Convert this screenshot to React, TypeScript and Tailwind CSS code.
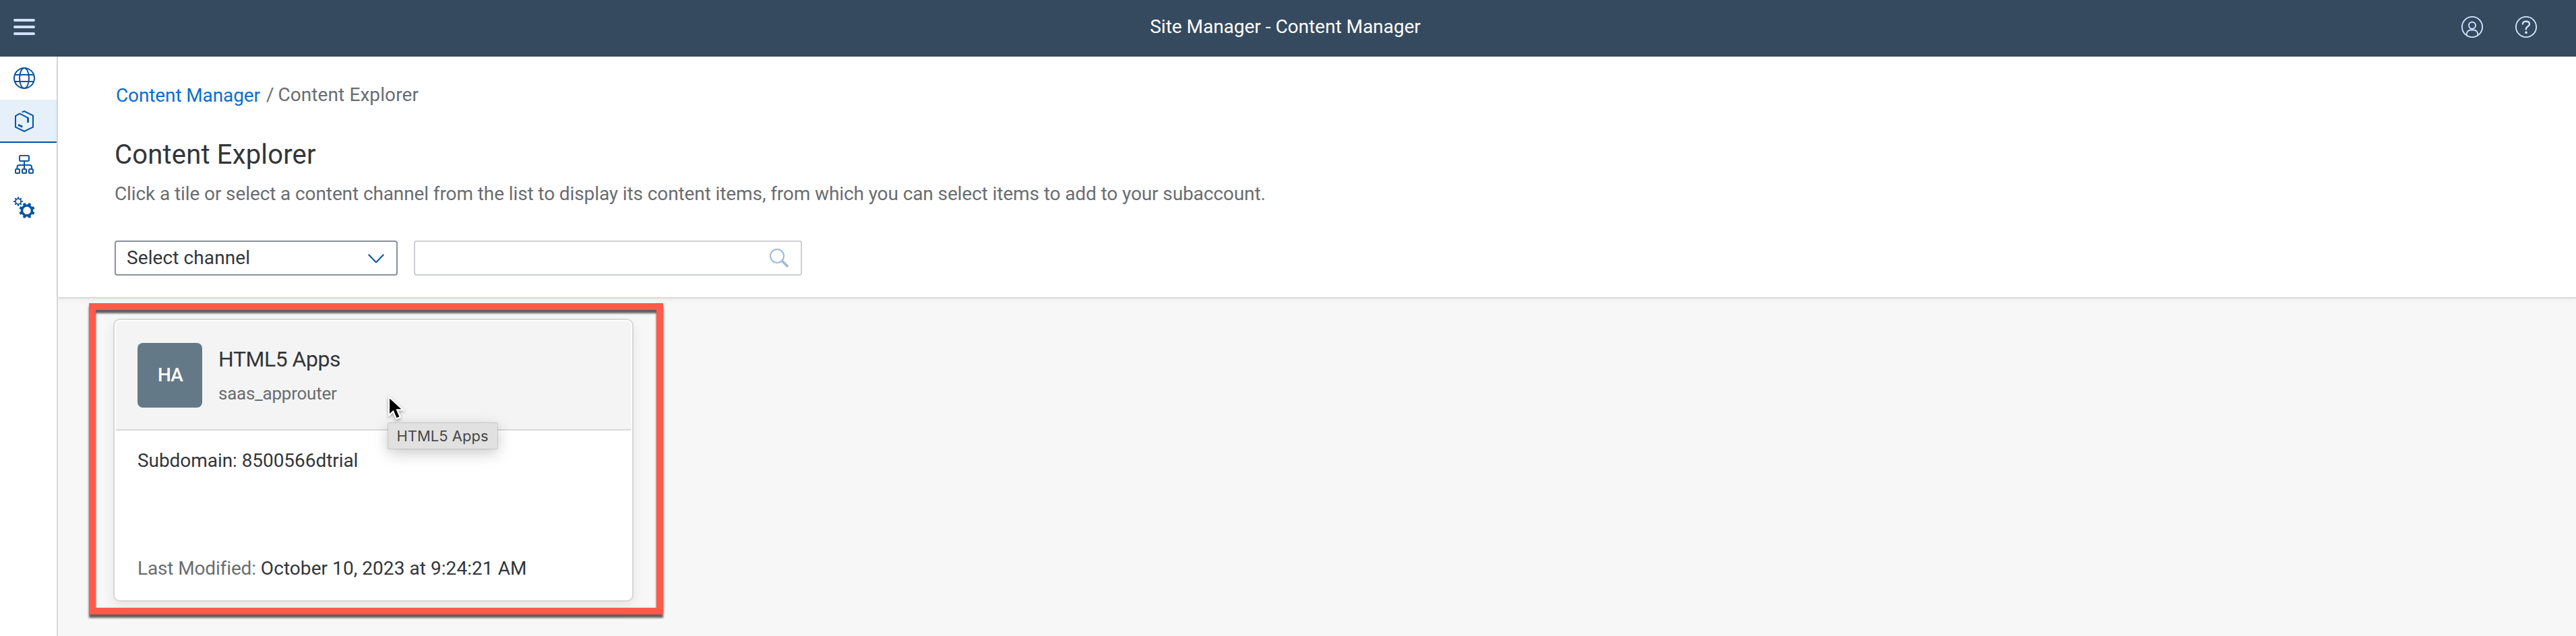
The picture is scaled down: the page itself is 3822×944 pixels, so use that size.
import type { ReactNode } from 'react';

const TEETH = [0, 45, 90, 135, 180, 225, 270, 315];

function MenuIcon() {
  return (
    <svg className="size-8 fill-[#d1e1ff]" viewBox="0 0 32 32">
      <rect x="0" y="4" width="32" height="4" rx="2" />
      <rect x="0" y="14" width="32" height="4" rx="2" />
      <rect x="0" y="24" width="32" height="4" rx="2" />
    </svg>
  );
}

function UserIcon() {
  return (
    <svg className="size-8 fill-none stroke-[#d1e1ff]" viewBox="0 0 32 32" strokeWidth="1.9">
      <circle cx="16" cy="16" r="15.1" />
      <circle cx="16" cy="13.7" r="5" />
      <path d="M7.7 28v-1.2c0-3.6 2.8-6.3 6.2-6.3h4.2c3.4 0 6.2 2.7 6.2 6.3V28" />
    </svg>
  );
}

function HelpIcon() {
  return (
    <svg className="size-8 fill-none stroke-[#d1e1ff]" viewBox="0 0 32 32" strokeWidth="1.9">
      <circle cx="16" cy="16" r="15.1" />
      <path
        d="M10.9 11.6C10.9 9.2 13 7.7 15.9 7.7c3 0 5.100 1.6 5.100 4 0 3.7-5.200 3.6-5.200 7.7"
        strokeWidth="2.4"
        strokeLinecap="round"
      />
      <circle cx="16" cy="24.2" r="1.9" className="fill-[#d1e1ff] stroke-none" />
    </svg>
  );
}

function GlobeIcon() {
  return (
    <svg className="size-8 fill-none stroke-[#0854a0]" viewBox="0 0 32 32" strokeWidth="2">
      <circle cx="16" cy="16" r="15" />
      <ellipse cx="16" cy="16" rx="7" ry="15" />
      <path d="M2 11h28M2 21h28" />
    </svg>
  );
}

function ProductIcon() {
  return (
    <svg className="size-8 fill-none stroke-[#0854a0]" viewBox="0 0 32 32" strokeWidth="2">
      <path d="M12.6 2.6 16 1l13 6.6v17L16 31 3 24.6V8l6.2-3.3 12.6 6.4v6.8" />
      <path d="M21.400 11v7" strokeWidth="2.4" />
      <path d="m7 21.200 6.300 3" strokeWidth="2.8" />
    </svg>
  );
}

function OrgChartIcon() {
  return (
    <svg className="size-8 fill-none stroke-[#0854a0]" viewBox="0 0 32 32" strokeWidth="2">
      <rect x="9" y="3" width="14" height="8" rx="1.2" />
      <path d="M16 11v11.5M5.500 22.5V20a3 3 0 0 1 3-3h15.500a3 3 0 0 1 3 3v2.5" />
      <rect x="3" y="23" width="6" height="6" rx="1" />
      <rect x="13" y="23" width="6" height="6" rx="1" />
      <rect x="23" y="23" width="6" height="6" rx="1" />
    </svg>
  );
}

function SettingsIcon() {
  return (
    <svg className="size-8 fill-none stroke-[#0854a0]" viewBox="0 0 32 32">
      <circle cx="7" cy="7" r="4" strokeWidth="1.7" />
      {TEETH.map((a) => (
        <path key={a} d="M7 3V.2" strokeWidth="2" transform={`rotate(${a} 7 7)`} />
      ))}
      <circle cx="20" cy="20.5" r="7.5" strokeWidth="3.6" />
      {TEETH.map((a) => (
        <path
          key={a}
          d="M20 12.5V8.9"
          strokeWidth="4"
          transform={`rotate(${a + 22.5} 20 20.5)`}
        />
      ))}
    </svg>
  );
}

function NavItem({ children, selected = false }: { children: ReactNode; selected?: boolean }) {
  return (
    <div
      className={
        selected
          ? 'h-16 border-b-2 border-[#0854a0] bg-[#e5f0fa] pt-4 pl-5'
          : 'h-16 pt-4 pl-5'
      }
    >
      {children}
    </div>
  );
}

function ChannelCard() {
  return (
    <article className="flex h-[416px] w-[768px] flex-col rounded-lg bg-white p-[2px] shadow-[0_0_0_2px_#d6d6d6,0_8px_18px_2px_rgba(0,0,0,0.07)]">
      <header className="flex h-[162px] shrink-0 gap-6 rounded-t-md border-b-2 border-[#d9d9d9] bg-[#f4f4f4] p-8">
        <div className="flex size-24 shrink-0 items-center justify-center rounded-lg bg-[#647987] pl-px text-[28px] leading-9 font-medium tracking-[-0.8px] text-white">
          HA
        </div>
        <div className="flex flex-col">
          <h2 className="mt-1 text-[32px] leading-10 tracking-[-0.5px]">HTML5 Apps</h2>
          <p className="mt-[15px] text-[26px] leading-8 tracking-[-0.25px] text-[#6a6d70]">
            saas_approuter
          </p>
        </div>
      </header>
      <div className="flex flex-1 flex-col justify-between px-8 pt-[27px] pb-[27px] text-[28px] leading-9">
        <p className="tracking-[-0.06px]">Subdomain: 8500566dtrial</p>
        <p>
          <span className="tracking-[-0.14px] text-[#6a6d70]">Last Modified:</span>{' '}
          <span className="tracking-[0.06px]">October 10, 2023 at 9:24:21 AM</span>
        </p>
      </div>
    </article>
  );
}

export default function App() {
  return (
    <div className="relative flex h-[944px] w-full flex-col overflow-hidden bg-[#f7f7f7] font-['Roboto',sans-serif] text-[#32363a]">
      <header className="grid h-[84px] shrink-0 grid-cols-[1fr_auto_1fr] items-start bg-[#354a5f]">
        <div className="pt-6 pl-5">
          <MenuIcon />
        </div>
        <div className="pt-[22px] pr-2 text-[28px] leading-9 tracking-[-0.02px] text-white">
          Site Manager - Content Manager
        </div>
        <div className="flex justify-end gap-12 pt-6 pr-[58px]">
          <UserIcon />
          <HelpIcon />
        </div>
      </header>

      <div className="flex flex-1">
        <nav className="w-[86px] shrink-0 border-r-2 border-[#d9d9d9] bg-white">
          <NavItem>
            <GlobeIcon />
          </NavItem>
          <NavItem selected>
            <ProductIcon />
          </NavItem>
          <NavItem>
            <OrgChartIcon />
          </NavItem>
          <NavItem>
            <SettingsIcon />
          </NavItem>
        </nav>

        <main className="flex flex-1 flex-col">
          <section className="h-[359px] shrink-0 border-b-2 border-[#d9d9d9] bg-white pt-[39px] pl-[84px] shadow-[0_2px_8px_rgba(0,0,0,0.05)]">
            <div className="flex h-[37px] text-[28px] leading-9">
              <span className="pt-px pl-[2px] tracking-[-0.12px] text-[#0a6ed1]">
                Content Manager
              </span>
              <span className="pl-[9px] text-[#6a6d70]">/</span>
              <span className="pl-[6px] tracking-[0.09px] text-[#6a6d70]">Content Explorer</span>
            </div>
            <h1 className="mt-[46px] text-[40px] leading-[48px] tracking-[0.18px]">
              Content Explorer
            </h1>
            <p className="mt-4 text-[28px] leading-9 tracking-[-0.105px] text-[#6a6d70]">
              Click a tile or select a content channel from the list to display its content items,
              from which you can select items to add to your subaccount.
            </p>
            <div className="mt-[51px] flex gap-6">
              <div className="flex h-[52px] w-[420px] items-center justify-between rounded-sm border-2 border-[#89919a] pr-[18px] pl-4 text-[28px] leading-9 tracking-[0.1px]">
                <span>Select channel</span>
                <svg
                  className="mt-[2px] h-[14px] w-6 fill-none stroke-[#0854a0]"
                  viewBox="0 0 24 14"
                  strokeWidth="2"
                >
                  <path d="m.8.8 10.500 11q.7.7 1.400 0L23.200.8" />
                </svg>
              </div>
              <div className="flex h-[52px] w-[576px] items-center justify-end rounded-sm border-2 border-[#cccfd2] pr-[18px]">
                <svg
                  className="size-7 fill-none stroke-[#9fb9d9]"
                  viewBox="0 0 28 28"
                  strokeLinecap="round"
                >
                  <circle cx="11" cy="11" r="10" strokeWidth="2" />
                  <path d="m18.800 18.800 7.200 7.200" strokeWidth="3.6" />
                </svg>
              </div>
            </div>
          </section>

          <section className="flex-1 pt-8 pl-[84px]">
            <ChannelCard />
          </section>
        </main>
      </div>

      <div className="absolute top-[450px] left-[132px] h-[462px] w-[852px] border-[10px] border-[#ff5a4b] filter-[drop-shadow(0_5px_1.5px_rgba(0,0,0,0.62))]" />

      <div className="absolute top-[628px] left-[576px] flex h-[38px] w-[162px] items-center justify-center rounded-[2px] bg-[#e1e1e1] pr-px pb-px font-['Inter',sans-serif] text-[22px] leading-7 whitespace-nowrap text-[#484848] shadow-[0_0_1px_1px_rgba(0,0,0,0.15),0_6px_22px_rgba(0,0,0,0.22)]">
        HTML5 Apps
      </div>

      <svg
        className="absolute top-[586px] left-[574px] h-11 w-8 stroke-white filter-[drop-shadow(0_2px_2px_rgba(0,0,0,0.35))]"
        viewBox="0 0 32 44"
      >
        <path
          d="M3 3v27.5l6.300-5.900 4.600 11 6-2.500-4.700-10.800h8.800z"
          strokeWidth="2.2"
          className="fill-black"
        />
      </svg>
    </div>
  );
}
